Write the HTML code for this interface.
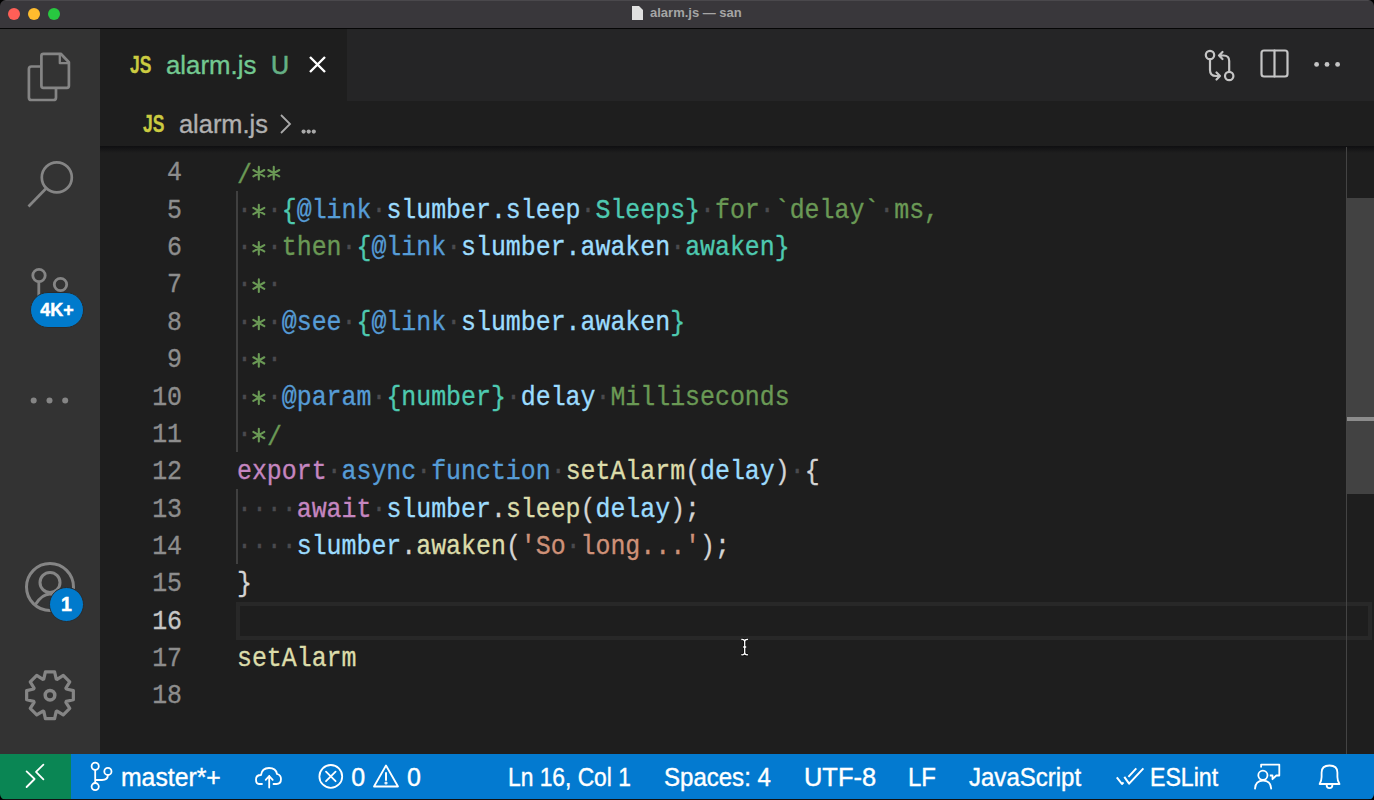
<!DOCTYPE html>
<html><head><meta charset="utf-8">
<style>
*{margin:0;padding:0;box-sizing:border-box}
html,body{width:1374px;height:800px;overflow:hidden;background:#1e1e1e}
body{position:relative;font-family:"Liberation Sans",sans-serif}
.abs{position:absolute}
svg{position:absolute;overflow:visible}
#title{left:0;top:0;width:1374px;height:28px;background:#39373b;border-top:1px solid #4a484c}
#titleline{left:0;top:27.6px;width:1374px;height:1.6px;background:#060606}
.tl{position:absolute;top:8px;width:12px;height:12px;border-radius:50%}
#act{left:0;top:29px;width:100px;height:725px;background:#333333}
#tabs{left:100px;top:29px;width:1274px;height:72px;background:#252526}
#tab{left:100px;top:29px;width:247px;height:72px;background:#1e1e1e}
#crumbs{left:100px;top:101px;width:1274px;height:46px;background:#1e1e1e}
#editor{left:100px;top:147px;width:1274px;height:607px;background:#1e1e1e}
#status{left:0;top:754px;width:1374px;height:45px;background:#037ad0}
#remote{left:0;top:754px;width:71px;height:45px;background:#0a8654}
#bottom{left:0;top:799px;width:1374px;height:1px;background:#111}
.txt{position:absolute;white-space:pre}
.code{position:absolute;left:237px;font-family:"Liberation Mono",monospace;font-size:24.9px;white-space:pre;line-height:37.36px;height:37.36px;color:#d4d4d4;transform:translateY(1.6px) scaleY(1.14);-webkit-text-stroke:0.3px currentColor}
.ln{position:absolute;left:120px;width:62px;text-align:right;font-family:"Liberation Mono",monospace;font-size:24.9px;line-height:37.36px;color:#8d8d8d;transform:translateY(1.6px) scaleY(1.14);-webkit-text-stroke:0.3px currentColor}
.w{color:#4a4a4e}
.c{color:#6a9955}.k{color:#569cd6}.b{color:#4ec9b0}.v{color:#9cdcfe}.p{color:#c586c0}.f{color:#dcdcaa}.s{color:#ce9178}
.st{position:absolute;top:755px;height:45px;line-height:45px;color:#fff;font-size:25px;white-space:pre;-webkit-text-stroke:0.4px #fff;transform-origin:0 0}
.guide{position:absolute;left:236px;width:2px;background:#404040}
</style></head><body>
<div id="title" class="abs"></div>
<div class="tl" style="left:8px;background:#fe5f57"></div>
<div class="tl" style="left:28px;background:#febc2e"></div>
<div class="tl" style="left:48px;background:#28c840"></div>
<svg style="left:632px;top:6px" width="11" height="14" viewBox="0 0 11 14"><path d="M0 0H7L11 4V14H0Z" fill="#e0e0e0"/></svg>
<div class="txt" style="left:650px;top:5px;font-size:13px;font-weight:bold;color:#a5a5a5;line-height:16px">alarm.js — san</div>
<div id="titleline" class="abs"></div>

<div id="act" class="abs"></div>
<svg style="left:0;top:0" width="100" height="800" viewBox="0 0 100 800" fill="none" stroke="#858585" stroke-width="2.7" stroke-linejoin="round">
<path d="M40 66.5H31.5Q28.9 66.5 28.9 69.1V97.4Q28.9 100 31.5 100H53.4Q56 100 56 97.4V89"/>
<path d="M60.8 53.8H43.4Q41.4 53.8 41.4 55.8V85.8Q41.4 87.8 43.4 87.8H66.9Q68.9 87.8 68.9 85.8V62.2Z"/>
<path d="M59.8 54.6V63.2H68.3" stroke-width="2.3"/>
<circle cx="56.8" cy="177.4" r="15"/>
<path d="M46 188.5L28.5 206.5"/>
<circle cx="39" cy="275.5" r="6.2" stroke-width="2.8"/>
<circle cx="60.5" cy="284.5" r="6.2" stroke-width="2.8"/>
<path d="M38.8 281.7V300" stroke-width="2.8"/>
<circle cx="50" cy="587" r="23.5" stroke-width="3"/>
<circle cx="50" cy="582.5" r="10" stroke-width="3"/>
<path d="M35 605Q42 594 50 594Q58 594 65 605" stroke-width="3"/>
<path d="M43.80 678.94 L45.40 671.85 L54.60 671.85 L56.20 678.94 L57.11 679.32 L63.26 675.44 L69.76 681.94 L65.88 688.09 L66.26 689.00 L73.35 690.60 L73.35 699.80 L66.26 701.40 L65.88 702.31 L69.76 708.46 L63.26 714.96 L57.11 711.08 L56.20 711.46 L54.60 718.55 L45.40 718.55 L43.80 711.46 L42.89 711.08 L36.74 714.96 L30.24 708.46 L34.12 702.31 L33.74 701.40 L26.65 699.80 L26.65 690.60 L33.74 689.00 L34.12 688.09 L30.24 681.94 L36.74 675.44 L42.89 679.32Z" stroke-width="3.2"/>
<circle cx="50" cy="695.2" r="4.8" stroke-width="3.5"/>
<g fill="#858585" stroke="none"><circle cx="33.7" cy="400.6" r="3"/><circle cx="49.5" cy="400.6" r="3"/><circle cx="65.2" cy="400.6" r="3"/></g>
</svg>
<div class="abs" style="left:30px;top:292px;width:54px;height:36px;border-radius:18px;background:#007acc;border:1px solid #2b2b2b"></div>
<div class="txt" style="left:31px;top:298px;width:52px;text-align:center;font-size:19px;font-weight:bold;color:#fff;line-height:24px;-webkit-text-stroke:0.5px #fff;transform:scaleX(0.94)">4K+</div>
<div class="abs" style="left:49px;top:587px;width:35px;height:35px;border-radius:50%;background:#007acc;border:1px solid #2b2b2b"></div>
<div class="txt" style="left:49px;top:592px;width:35px;text-align:center;font-size:19.5px;font-weight:bold;color:#fff;line-height:24px;-webkit-text-stroke:0.5px #fff">1</div>
<div id="tabs" class="abs"></div>
<div id="tab" class="abs"></div>
<div id="crumbs" class="abs"></div>
<svg style="left:0;top:0" width="1374" height="100" viewBox="0 0 1374 100" fill="none" stroke="#c5c5c5" stroke-width="2.2" stroke-linejoin="round" stroke-linecap="round">
<circle cx="1210" cy="55" r="4.2"/>
<circle cx="1229.2" cy="76" r="4.2"/>
<path d="M1210 59.2V70Q1210 76 1216 76H1220M1216.5 72.5L1220 76L1216.5 79.5"/>
<path d="M1229.2 71.8V61Q1229.2 55.5 1223.5 55.5H1219M1222.5 52L1219 55.5L1222.5 59"/>
<rect x="1261.5" y="50.5" width="26" height="26" rx="2.5"/>
<path d="M1274.5 50.5V76.5"/>
<g fill="#c5c5c5" stroke="none"><circle cx="1316.6" cy="64.4" r="2.4"/><circle cx="1327" cy="64.4" r="2.4"/><circle cx="1337.6" cy="64.4" r="2.4"/></g>
</svg>
<div id="editor" class="abs"></div>

<!-- tab content -->
<div class="txt" style="left:130px;top:53px;font-size:23px;font-weight:bold;color:#cbcb41;line-height:24px;transform:scaleX(0.76);transform-origin:0 0;-webkit-text-stroke:0.3px #cbcb41">JS</div>
<div class="txt" style="left:166px;top:50px;font-size:25.8px;color:#73c991;line-height:30px;-webkit-text-stroke:0.35px #73c991">alarm.js</div>
<div class="txt" style="left:271px;top:50px;font-size:25px;color:#65b085;line-height:30px;-webkit-text-stroke:0.6px #65b085">U</div>
<svg style="left:309px;top:56px" width="17" height="17" viewBox="0 0 17 17"><path d="M1 1L16 16M16 1L1 16" stroke="#fff" stroke-width="2.4"/></svg>

<!-- breadcrumbs -->
<div class="txt" style="left:143px;top:112px;font-size:23px;font-weight:bold;color:#cbcb41;line-height:24px;transform:scaleX(0.76);transform-origin:0 0;-webkit-text-stroke:0.3px #cbcb41">JS</div>
<div class="txt" style="left:179px;top:109px;font-size:25.4px;color:#b0b0b0;line-height:30px;-webkit-text-stroke:0.35px #b0b0b0">alarm.js</div>
<svg style="left:280px;top:114px" width="11" height="20" viewBox="0 0 11 20"><path d="M1 1L10 10L1 19" stroke="#a9a9a9" stroke-width="1.8" fill="none"/></svg>
<svg style="left:0;top:0" width="400" height="200" viewBox="0 0 400 200"><g fill="#a9a9a9"><circle cx="303.6" cy="131.6" r="2.1"/><circle cx="308.7" cy="131.6" r="2.1"/><circle cx="313.8" cy="131.6" r="2.1"/></g></svg>

<!-- editor -->
<div class="guide" style="top:190.7px;height:261.5px"></div>
<div class="guide" style="top:489.4px;height:74.7px"></div>
<div class="abs" style="left:236px;top:602px;width:1136px;height:38px;border:4px solid #282828"></div>

<div class="ln" style="top:153.3px">4</div>
<div class="ln" style="top:190.7px">5</div>
<div class="ln" style="top:228.0px">6</div>
<div class="ln" style="top:265.4px">7</div>
<div class="ln" style="top:302.7px">8</div>
<div class="ln" style="top:340.1px">9</div>
<div class="ln" style="top:377.5px">10</div>
<div class="ln" style="top:414.8px">11</div>
<div class="ln" style="top:452.2px">12</div>
<div class="ln" style="top:489.5px">13</div>
<div class="ln" style="top:526.9px">14</div>
<div class="ln" style="top:564.3px">15</div>
<div class="ln" style="top:601.6px;color:#c6c6c6">16</div>
<div class="ln" style="top:639.0px">17</div>
<div class="ln" style="top:676.3px">18</div>

<div class="code" style="top:153.3px"><span class="c" style="position:relative;top:2px">/</span></div>
<div class="code" style="top:190.7px"><span class="w">·</span><span class="c"> </span><span class="w">·</span><span class="b">{</span><span class="k">@link</span><span class="w">·</span><span class="v">slumber.sleep</span><span class="w">·</span><span class="b">Sleeps}</span><span class="w">·</span><span class="c">for</span><span class="w">·</span><span class="c">`delay`</span><span class="w">·</span><span class="c">ms,</span></div>
<div class="code" style="top:228.0px"><span class="w">·</span><span class="c"> </span><span class="w">·</span><span class="c">then</span><span class="w">·</span><span class="b">{</span><span class="k">@link</span><span class="w">·</span><span class="v">slumber.awaken</span><span class="w">·</span><span class="b">awaken}</span></div>
<div class="code" style="top:265.4px"><span class="w">·</span><span class="c"> </span><span class="w">·</span></div>
<div class="code" style="top:302.7px"><span class="w">·</span><span class="c"> </span><span class="w">·</span><span class="k">@see</span><span class="w">·</span><span class="b">{</span><span class="k">@link</span><span class="w">·</span><span class="v">slumber.awaken</span><span class="b">}</span></div>
<div class="code" style="top:340.1px"><span class="w">·</span><span class="c"> </span><span class="w">·</span></div>
<div class="code" style="top:377.5px"><span class="w">·</span><span class="c"> </span><span class="w">·</span><span class="k">@param</span><span class="w">·</span><span class="b">{number}</span><span class="w">·</span><span class="v">delay</span><span class="w">·</span><span class="c">Milliseconds</span></div>
<div class="code" style="top:414.8px"><span class="w">·</span><span class="c"> </span><span class="c" style="position:relative;top:2px">/</span></div>
<div class="code" style="top:452.2px"><span class="p">export</span><span class="w">·</span><span class="k">async</span><span class="w">·</span><span class="k">function</span><span class="w">·</span><span class="f">setAlarm</span>(<span class="v">delay</span>)<span class="w">·</span>{</div>
<div class="code" style="top:489.5px"><span class="w">····</span><span class="p">await</span><span class="w">·</span><span class="v">slumber</span>.<span class="f">sleep</span>(<span class="v">delay</span>);</div>
<div class="code" style="top:526.9px"><span class="w">····</span><span class="v">slumber</span>.<span class="f">awaken</span>(<span class="s">'So</span><span class="w">·</span><span class="s">long...'</span>);</div>
<div class="code" style="top:564.3px">}</div>
<div class="code" style="top:639.0px"><span class="f">setAlarm</span></div>

<svg style="left:0;top:0" width="1374" height="800" viewBox="0 0 1374 800"><path d="M258.82 166.88L258.82 179.48M253.37 170.03L264.28 176.33M253.37 176.33L264.28 170.03M273.77 166.88L273.77 179.48M268.32 170.03L279.23 176.33M268.32 176.33L279.23 170.03M258.82 204.68L258.82 217.28M253.37 207.83L264.28 214.13M253.37 214.13L264.28 207.83M258.82 241.98L258.82 254.58M253.37 245.13L264.28 251.43M253.37 251.43L264.28 245.13M258.82 279.38L258.82 291.98M253.37 282.53L264.28 288.83M253.37 288.83L264.28 282.53M258.82 316.68L258.82 329.28M253.37 319.83L264.28 326.13M253.37 326.13L264.28 319.83M258.82 354.08L258.82 366.68M253.37 357.23L264.28 363.53M253.37 363.53L264.28 357.23M258.82 391.48L258.82 404.08M253.37 394.63L264.28 400.93M253.37 400.93L264.28 394.63M258.82 428.78L258.82 441.38M253.37 431.93L264.28 438.23M253.37 438.23L264.28 431.93" stroke="#6a9955" stroke-width="2.1" stroke-linecap="round"/></svg>
<div class="abs" style="left:100px;top:146px;width:1274px;height:7px;background:linear-gradient(#0f0f11,rgba(30,30,30,0))"></div>
<!-- scrollbar -->
<div class="abs" style="left:1346px;top:147px;width:1px;height:607px;background:#444"></div>
<div class="abs" style="left:1347px;top:198px;width:27px;height:296px;background:#424242"></div>
<div class="abs" style="left:1347px;top:417px;width:27px;height:4px;background:#8c8c8c"></div>

<!-- status -->
<div id="status" class="abs"></div>
<div id="remote" class="abs"></div>
<svg style="left:0;top:0" width="1374" height="800" viewBox="0 0 1374 800" fill="none" stroke="#fff" stroke-width="1.8" stroke-linejoin="round" stroke-linecap="round">
<path d="M26.6 771.4L34.6 779L26.6 787M43.4 764.6L36 771.8L43.4 779.4"/>
<circle cx="95.2" cy="766.2" r="3.6"/><circle cx="95.2" cy="786.6" r="3.6"/><circle cx="107.9" cy="771.4" r="3.6"/>
<path d="M95.2 769.8V783M107.9 775Q107.9 780 102 780H95.2"/>
<path d="M262 784H259Q256 784 256 779.5Q256 775 261 775Q262 768 269 768Q276 768 277 774Q281 775 281 779Q281 784 276.5 784H273.5"/>
<path d="M269.2 787.5V776M265.7 779.8L269.2 776L272.7 779.8"/>
<circle cx="330.8" cy="776.4" r="11.4"/>
<path d="M326 771.6L335.6 781.2M335.6 771.6L326 781.2"/>
<path d="M386 765.5L398 786.5H374Z"/>
<path d="M386 773V780" stroke-width="2"/><circle cx="386" cy="783" r="0.6" stroke-width="2"/>
<path d="M1116.8 777.3L1122 784L1123.5 782.4M1124.3 776.9L1129.1 783.6L1143.4 768.4M1128.4 776.9L1136.3 768.4" stroke-width="2" stroke-linecap="butt"/>
<path d="M1261.1 767.6V764.6H1279.3V775.5H1276.3L1272.5 779.2V775.5H1269.8" stroke-linecap="butt"/>
<circle cx="1262.9" cy="775.3" r="4.6"/>
<path d="M1255 788.6Q1255.5 780.7 1263.1 780.7Q1270.7 780.7 1271.2 788.6"/>
<path d="M1319.6 784H1339.5Q1337.4 781 1337.4 777V772.5Q1337.4 765.5 1329.5 765.5Q1321.6 765.5 1321.6 772.5V777Q1321.6 781 1319.6 784Z"/>
<path d="M1326.6 784.8Q1326.6 788.2 1329.5 788.2Q1332.4 788.2 1332.4 784.8"/>
</svg>
<div id="bottom" class="abs"></div>
<div class="st" id="st0" style="left:121px;transform:scaleX(0.99)">master*+</div>
<div class="st" id="st1" style="left:351.2px;transform:scaleX(1)">0</div>
<div class="st" id="st2" style="left:407px;transform:scaleX(1)">0</div>
<div class="st" id="st3" style="left:508.1px;transform:scaleX(0.911)">Ln 16, Col 1</div>
<div class="st" id="st4" style="left:664px;transform:scaleX(0.961)">Spaces: 4</div>
<div class="st" id="st5" style="left:803.6px;transform:scaleX(1.017)">UTF-8</div>
<div class="st" id="st6" style="left:908.1px;transform:scaleX(0.956)">LF</div>
<div class="st" id="st7" style="left:969px;transform:scaleX(0.961)">JavaScript</div>
<div class="st" id="st8" style="left:1150.2px;transform:scaleX(0.924)">ESLint</div>
<svg style="left:736px;top:635px" width="18" height="24" viewBox="736 635 18 24"><path d="M741.3 639.5Q744.7 639 744.7 642V652.5Q744.7 655.2 741.3 654.7M748 639.5Q744.7 639 744.7 642M748 654.7Q744.7 655.2 744.7 652.5M743.2 647H746.2" stroke="#000" stroke-width="3" fill="none" stroke-opacity="0.7"/><path d="M741.3 639.5Q744.7 639 744.7 642V652.5Q744.7 655.2 741.3 654.7M748 639.5Q744.7 639 744.7 642M748 654.7Q744.7 655.2 744.7 652.5M743.2 647H746.2" stroke="#fff" stroke-width="1.3" fill="none"/></svg>
<svg style="left:0;top:0" width="1374" height="800" viewBox="0 0 1374 800"><g fill="#000">
<path d="M0 0H6A6 6 0 0 0 0 6Z"/><path d="M1374 0H1368A6 6 0 0 1 1374 6Z"/>
<path d="M0 800H6A6 6 0 0 1 0 794Z"/><path d="M1374 800H1368A6 6 0 0 0 1374 794Z"/></g></svg>
</body></html>
